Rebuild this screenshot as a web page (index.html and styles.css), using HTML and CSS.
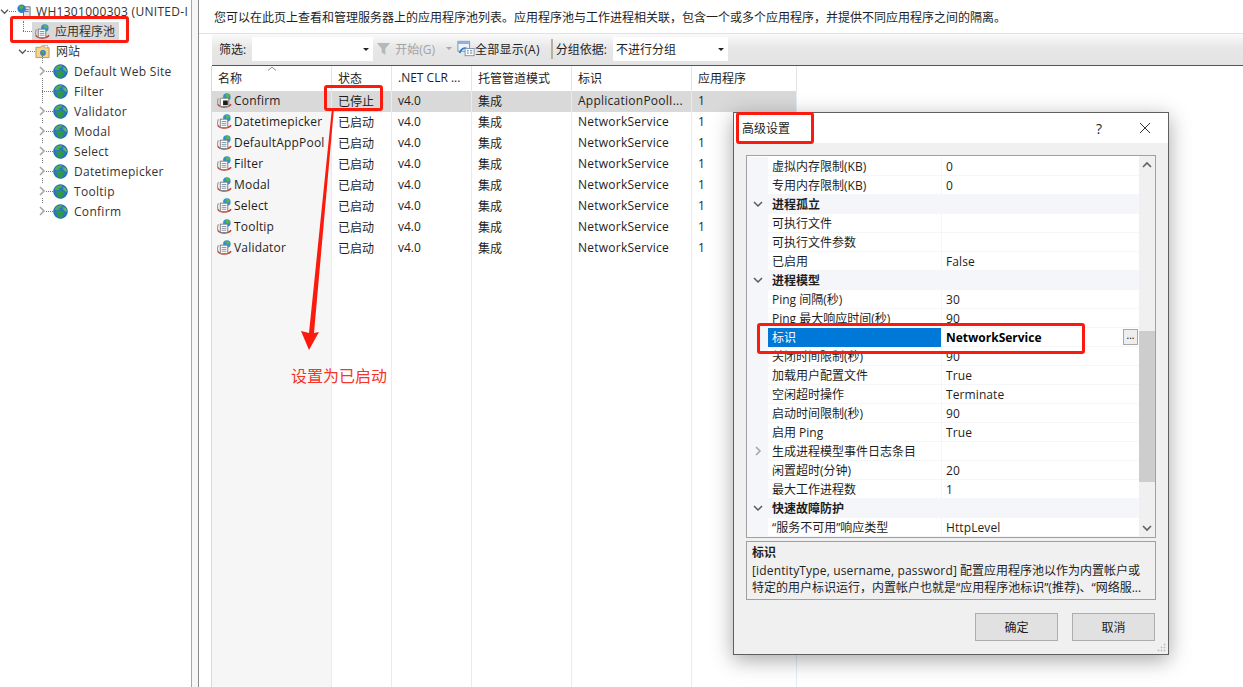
FILE: index.html
```html
<!DOCTYPE html>
<html lang="zh-CN">
  <head>
    <meta charset="utf-8">
    <title>应用程序池</title>
    <link rel="stylesheet" href="styles.css">
  </head>
  <body>
    <!-- icons used more than once -->
    <svg class="defs" width="0" height="0">
      <symbol id="globe" viewBox="0 0 16 16">
        <circle cx="8" cy="8" r="7.5" fill="#2b78bf"/>
        <path d="M3 3.200C5 1.400 8 .9 10.400 1.400L9.200 3.600 7 4 6.600 6 4.400 6.600 1.500 6C1.700 5 2.300 4 3 3.200Z" fill="#4fae4c"/>
        <path d="M3.500 8 8.300 6.800 11.800 9 10.400 12.300 9 15.300C6.800 15.400 5 14.400 4.600 12.500Z" fill="#2f9a46"/>
        <path d="M11 3 14.400 5.400 15.200 8.500 12.600 7.400 11 5.600Z" fill="#63bd58"/>
        <circle cx="8" cy="8" r="7.300" fill="none" stroke="#1c5a94" stroke-width=".6"/>
      </symbol>
      <symbol id="pool" viewBox="0 0 16 16">
        <path d="M1.500 5.500C.3 8 .3 10 1 12" fill="none" stroke="#9a9a9a" stroke-width="1.200"/>
        <circle cx="10.500" cy="4.300" r="4" fill="#2f8fd0"/>
        <path d="M8.800 1.600 11.800 .9 14 3.200 11.500 5 10 4.200Z" fill="#58b64c"/>
        <path d="M.8 12C2.500 15.800 12.500 15.800 15 12" fill="none" stroke="#c8392f" stroke-width="1.500"/>
        <rect x="3.500" y="5.500" width="8" height="9" fill="#fbfbfb" stroke="#7d7d7d"/>
        <path d="M5 8H10M5 10H10M5 12H10" stroke="#7f95ad"/>
      </symbol>
      <symbol id="pool-stop" viewBox="0 0 16 16">
        <path d="M1.500 5.500C.3 8 .3 10 1 12" fill="none" stroke="#9a9a9a" stroke-width="1.200"/>
        <circle cx="10.500" cy="4.300" r="4" fill="#2f8fd0"/>
        <path d="M8.800 1.600 11.800 .9 14 3.200 11.500 5 10 4.200Z" fill="#58b64c"/>
        <path d="M.8 12C2.500 15.800 12.500 15.800 15 12" fill="none" stroke="#c8392f" stroke-width="1.500"/>
        <rect x="3.500" y="5.500" width="9" height="9" rx="1" fill="#fbfbfb" stroke="#7d7d7d"/>
        <rect x="6.500" y="8" width="5" height="5" fill="#1c1c1c"/>
      </symbol>
      <symbol id="chev-right" viewBox="0 0 8 10">
        <path d="M2 1 6 5 2 9" fill="none" stroke="#a6a6a6" stroke-width="1.600"/>
      </symbol>
      <symbol id="chev-down" viewBox="0 0 10 8">
        <path d="M1 2 5 6 9 2" fill="none" stroke="#595959" stroke-width="1.500"/>
      </symbol>
    </svg>

    <nav class="tree">
      <div class="tree-row tree-server">
        <svg class="chev"><use href="#chev-down"/></svg>
        <i class="dots dots-short"></i>
        <svg class="icon" viewBox="0 0 16 16">
          <rect x="8" y="3" width="7" height="11" fill="#dfe3e8" stroke="#6b7078"/>
          <path d="M9.500 6H13.500M9.500 8H13.500" stroke="#6b7078"/>
          <circle cx="6" cy="5" r="4.500" fill="#2f7fc9"/>
          <path d="M3 2.500 7 1.500 8 4 5 6Z" fill="#55b04a"/>
          <rect x="8" y="13" width="4" height="2" fill="#3fa142"/>
        </svg>
        <span class="tree-label">WH1301000303 (UNITED-I</span>
      </div>
      <div class="tree-row tree-pools">
        <i class="dots dots-pools"></i>
        <span class="tree-selected">
          <svg class="icon"><use href="#pool"/></svg>
          <span class="tree-label">应用程序池</span>
        </span>
      </div>
      <div class="tree-row tree-sites">
        <svg class="chev"><use href="#chev-down"/></svg>
        <i class="dots dots-tiny"></i>
        <svg class="icon" viewBox="0 0 16 16">
          <path d="M1 3.500H6L7 2H13V4H15V14.500H1Z" fill="#f3d58c" stroke="#b9965a"/>
          <path d="M10 1.500H13.500V4H10Z" fill="#fff" stroke="#b9965a" stroke-width=".6"/>
          <circle cx="8.500" cy="9.500" r="3" fill="#2f7fc9"/>
          <path d="M7 8 9.500 7.500 10 10 8 11Z" fill="#55b04a"/>
        </svg>
        <span class="tree-label">网站</span>
      </div>
      <div class="site-list">
        <div class="tree-row site">
          <svg class="chev-r"><use href="#chev-right"/></svg><i class="dots"></i>
          <svg class="icon"><use href="#globe"/></svg><span class="tree-label">Default Web Site</span>
        </div>
        <div class="tree-row site">
          <span class="chev-r chev-none"></span><i class="dots dots-long"></i>
          <svg class="icon"><use href="#globe"/></svg><span class="tree-label">Filter</span>
        </div>
        <div class="tree-row site">
          <svg class="chev-r"><use href="#chev-right"/></svg><i class="dots"></i>
          <svg class="icon"><use href="#globe"/></svg><span class="tree-label">Validator</span>
        </div>
        <div class="tree-row site">
          <svg class="chev-r"><use href="#chev-right"/></svg><i class="dots"></i>
          <svg class="icon"><use href="#globe"/></svg><span class="tree-label">Modal</span>
        </div>
        <div class="tree-row site">
          <svg class="chev-r"><use href="#chev-right"/></svg><i class="dots"></i>
          <svg class="icon"><use href="#globe"/></svg><span class="tree-label">Select</span>
        </div>
        <div class="tree-row site">
          <svg class="chev-r"><use href="#chev-right"/></svg><i class="dots"></i>
          <svg class="icon"><use href="#globe"/></svg><span class="tree-label">Datetimepicker</span>
        </div>
        <div class="tree-row site">
          <svg class="chev-r"><use href="#chev-right"/></svg><i class="dots"></i>
          <svg class="icon"><use href="#globe"/></svg><span class="tree-label">Tooltip</span>
        </div>
        <div class="tree-row site">
          <svg class="chev-r"><use href="#chev-right"/></svg><i class="dots"></i>
          <svg class="icon"><use href="#globe"/></svg><span class="tree-label">Confirm</span>
        </div>
      </div>
    </nav>

    <div class="splitter"></div>

    <main class="content">
      <p class="intro">您可以在此页上查看和管理服务器上的应用程序池列表。应用程序池与工作进程相关联，包含一个或多个应用程序，并提供不同应用程序之间的隔离。</p>

      <div class="toolbar">
        <label class="tb-label">筛选:</label>
        <div class="combo combo-filter"><b class="caret"></b></div>
        <svg class="tb-funnel" viewBox="0 0 16 16">
          <path d="M1 2H15L10 8V15L6 12V8Z" fill="#b5b9b8"/>
        </svg>
        <span class="tb-disabled">开始(G)</span>
        <b class="caret caret-disabled"></b>
        <svg class="tb-show" viewBox="0 0 20 18">
          <rect x="1" y="1" width="13" height="11" fill="#eef3f9" stroke="#7a8ea8"/>
          <rect x="1" y="1" width="13" height="3" fill="#8db3dc"/>
          <path d="M3 14C4 9 8 8 11 9" fill="none" stroke="#2a7fc9" stroke-width="2"/>
          <rect x="9" y="9" width="10" height="8" fill="#fff" stroke="#7a8ea8"/>
          <path d="M11 11.500H13M14.500 11.500H17M11 14H13M14.500 14H17" stroke="#4a6a8a"/>
        </svg>
        <span class="tb-text">全部显示(A)</span>
        <i class="tb-sep"></i>
        <label class="tb-label">分组依据:</label>
        <div class="combo combo-group">不进行分组<b class="caret"></b></div>
      </div>

      <table class="pools">
        <thead>
          <tr>
            <th class="col-name">名称<svg class="sort" viewBox="0 0 10 5"><path d="M1 4.500 5 1 9 4.500" fill="none" stroke="#8a8a8a"/></svg></th>
            <th class="col-state">状态</th>
            <th class="col-clr">.NET CLR ...</th>
            <th class="col-mode">托管管道模式</th>
            <th class="col-id">标识</th>
            <th class="col-apps">应用程序</th>
          </tr>
        </thead>
        <tbody>
          <tr class="selected">
            <td class="name-cell"><svg class="icon"><use href="#pool-stop"/></svg>Confirm</td>
            <td>已停止</td><td>v4.0</td><td>集成</td><td>ApplicationPoolI...</td><td>1</td>
          </tr>
          <tr>
            <td class="name-cell"><svg class="icon"><use href="#pool"/></svg>Datetimepicker</td>
            <td>已启动</td><td>v4.0</td><td>集成</td><td>NetworkService</td><td>1</td>
          </tr>
          <tr>
            <td class="name-cell"><svg class="icon"><use href="#pool"/></svg>DefaultAppPool</td>
            <td>已启动</td><td>v4.0</td><td>集成</td><td>NetworkService</td><td>1</td>
          </tr>
          <tr>
            <td class="name-cell"><svg class="icon"><use href="#pool"/></svg>Filter</td>
            <td>已启动</td><td>v4.0</td><td>集成</td><td>NetworkService</td><td>1</td>
          </tr>
          <tr>
            <td class="name-cell"><svg class="icon"><use href="#pool"/></svg>Modal</td>
            <td>已启动</td><td>v4.0</td><td>集成</td><td>NetworkService</td><td>1</td>
          </tr>
          <tr>
            <td class="name-cell"><svg class="icon"><use href="#pool"/></svg>Select</td>
            <td>已启动</td><td>v4.0</td><td>集成</td><td>NetworkService</td><td>1</td>
          </tr>
          <tr>
            <td class="name-cell"><svg class="icon"><use href="#pool"/></svg>Tooltip</td>
            <td>已启动</td><td>v4.0</td><td>集成</td><td>NetworkService</td><td>1</td>
          </tr>
          <tr>
            <td class="name-cell"><svg class="icon"><use href="#pool"/></svg>Validator</td>
            <td>已启动</td><td>v4.0</td><td>集成</td><td>NetworkService</td><td>1</td>
          </tr>
          <tr class="filler">
            <td class="name-cell"></td><td></td><td></td><td></td><td></td><td></td>
          </tr>
        </tbody>
      </table>
    </main>

    <!-- advanced settings window -->
    <section class="dialog">
      <header class="dialog-title">
        <span class="dialog-name">高级设置</span>
        <span class="dialog-help">?</span>
        <svg class="dialog-close" viewBox="0 0 12 12"><path d="M1 1 11 11M11 1 1 11" stroke="#333" stroke-width="1"/></svg>
      </header>
      <div class="dialog-body">
        <div class="grid-box">
          <div class="props">
            <div class="prop"><span class="gutter"></span><span class="key">虚拟内存限制(KB)</span><span class="val">0</span></div>
            <div class="prop"><span class="gutter"></span><span class="key">专用内存限制(KB)</span><span class="val">0</span></div>
            <div class="prop group"><span class="gutter"><svg class="gchev"><use href="#chev-down"/></svg></span><span class="key">进程孤立</span></div>
            <div class="prop"><span class="gutter"></span><span class="key">可执行文件</span><span class="val"></span></div>
            <div class="prop"><span class="gutter"></span><span class="key">可执行文件参数</span><span class="val"></span></div>
            <div class="prop"><span class="gutter"></span><span class="key">已启用</span><span class="val">False</span></div>
            <div class="prop group"><span class="gutter"><svg class="gchev"><use href="#chev-down"/></svg></span><span class="key">进程模型</span></div>
            <div class="prop"><span class="gutter"></span><span class="key">Ping 间隔(秒)</span><span class="val">30</span></div>
            <div class="prop"><span class="gutter"></span><span class="key">Ping 最大响应时间(秒)</span><span class="val">90</span></div>
            <div class="prop active"><span class="gutter"></span><span class="key">标识</span><span class="val">NetworkService<button class="more">...</button></span></div>
            <div class="prop"><span class="gutter"></span><span class="key">关闭时间限制(秒)</span><span class="val">90</span></div>
            <div class="prop"><span class="gutter"></span><span class="key">加载用户配置文件</span><span class="val">True</span></div>
            <div class="prop"><span class="gutter"></span><span class="key">空闲超时操作</span><span class="val">Terminate</span></div>
            <div class="prop"><span class="gutter"></span><span class="key">启动时间限制(秒)</span><span class="val">90</span></div>
            <div class="prop"><span class="gutter"></span><span class="key">启用 Ping</span><span class="val">True</span></div>
            <div class="prop"><span class="gutter"><svg class="gchev-r"><use href="#chev-right"/></svg></span><span class="key">生成进程模型事件日志条目</span><span class="val"></span></div>
            <div class="prop"><span class="gutter"></span><span class="key">闲置超时(分钟)</span><span class="val">20</span></div>
            <div class="prop"><span class="gutter"></span><span class="key">最大工作进程数</span><span class="val">1</span></div>
            <div class="prop group"><span class="gutter"><svg class="gchev"><use href="#chev-down"/></svg></span><span class="key">快速故障防护</span></div>
            <div class="prop"><span class="gutter"></span><span class="key">“服务不可用”响应类型</span><span class="val">HttpLevel</span></div>
          </div>
          <div class="scrollbar">
            <svg class="sb-arrow" viewBox="0 0 10 8"><path d="M1 6 5 2 9 6" fill="none" stroke="#606060" stroke-width="1.600"/></svg>
            <div class="sb-track"><div class="sb-thumb"></div></div>
            <svg class="sb-arrow" viewBox="0 0 10 8"><path d="M1 2 5 6 9 2" fill="none" stroke="#606060" stroke-width="1.600"/></svg>
          </div>
        </div>
        <div class="desc">
          <strong class="desc-title">标识</strong>
          <p class="desc-text"><span class="latin">[identityType, username, password]</span> 配置应用程序池以作为内置帐户或<br>特定的用户标识运行，内置帐户也就是“应用程序池标识”(推荐)、“网络服...</p>
        </div>
        <div class="dialog-buttons">
          <button class="btn">确定</button>
          <button class="btn">取消</button>
        </div>
      </div>
      <svg class="grip" viewBox="0 0 12 12">
        <path d="M9 1H11V3H9ZM5 5H7V7H5ZM9 5H11V7H9ZM1 9H3V11H1ZM5 9H7V11H5ZM9 9H11V11H9Z" fill="#b5b5b5"/>
      </svg>
    </section>

    <!-- red annotations on top of the screenshot -->
    <div class="mark mark-pools"></div>
    <div class="mark mark-state"></div>
    <div class="mark mark-title"></div>
    <div class="mark mark-identity"></div>
    <svg class="arrow" viewBox="0 0 40 245">
      <path d="M33 1 34 1 14 226 19 225 9 243 1 224 9 226 32 1Z" fill="#fb1a0e"/>
    </svg>
    <span class="note">设置为已启动</span>
  </body>
</html>
```

FILE: styles.css
```css
* {
  box-sizing: border-box;
}

html, body {
  margin: 0;
  height: 687px;
  overflow: hidden;
}

body {
  display: flex;
  position: relative;
  width: 1243px;
  background-color: #fff;
  color: #1e1e1e;
  font-family: "Open Sans", "Noto Sans CJK SC", sans-serif;
  font-size: 12px;
}

.defs {
  position: absolute;
}

.icon {
  flex: none;
  width: 15px;
  height: 15px;
}

/* left tree */
.tree {
  flex: none;
  width: 192px;
  padding-top: 1px;
  overflow: hidden;
  border-right: 1px solid #a6a6a6;
}

.tree-row {
  display: flex;
  align-items: center;
  height: 20px;
  white-space: nowrap;
}

.tree-label {
  color: #333;
  letter-spacing: .3px;
}

.tree-selected .tree-label,
.tree-sites .tree-label {
  letter-spacing: 0;
}

.dots {
  flex: none;
  width: 7px;
  border-top: 1px dotted #777;
}

.chev {
  flex: none;
  width: 9px;
  height: 7px;
}

.chev-r {
  flex: none;
  width: 8px;
  height: 14px;
  padding: 2px 0;
  background-color: #fff;
}

.chev-none {
  background: none;
}

.tree-server .icon {
  margin-right: 5px;
}

.tree-pools {
  position: relative;
  padding-left: 23px;
}

/* dotted line from the server node down to the pools node */
.tree-pools::before {
  content: "";
  position: absolute;
  left: 23px;
  top: 0;
  height: 10px;
  border-left: 1px dotted #777;
}

.dots-pools {
  width: 9px;
}

.tree-selected {
  display: flex;
  align-items: center;
  width: 87px;
  height: 18px;
  padding-left: 3px;
  background-color: #d9d9d9;
}

.tree-selected .icon {
  margin-right: 5px;
}

.tree-sites {
  padding-left: 18px;
}

.dots-tiny {
  width: 8px;
}

.tree-sites .icon {
  margin-right: 6px;
}

.site-list {
  position: relative;
  padding-left: 38px;
}

/* dotted line joining the sites */
.site-list::before {
  content: "";
  position: absolute;
  left: 42px;
  top: -8px;
  bottom: 10px;
  border-left: 1px dotted #777;
}

.site > * {
  position: relative;
}

.site .icon {
  margin-right: 6px;
}

.dots-long {
  margin-left: -4px;
  width: 11px;
}

/* thin pane between tree and list */
.splitter {
  flex: none;
  width: 7px;
  background-color: #f6f6f6;
  border-right: 1px solid #8a8a8a;
}

.content {
  flex: 1;
  display: flex;
  flex-direction: column;
  min-width: 0;
}

.intro {
  height: 34px;
  margin: 0;
  padding: 9px 0 0 15px;
  line-height: 17px;
  border-bottom: 1px solid #e2e2e2;
}

/* toolbar */
.toolbar {
  display: flex;
  align-items: center;
  flex: none;
  height: 32px;
  margin-left: 13px;
  padding: 0 0 2px 7px;
  background: linear-gradient(#fafafa, #e8e7e8 45%, #e4e3e4);
  border-bottom: 1px solid #54545e;
}

.tb-label {
  white-space: nowrap;
}

.combo {
  display: flex;
  align-items: center;
  position: relative;
  height: 24px;
  background-color: #fff;
}

.combo-filter {
  width: 121px;
  margin-left: 6px;
}

.combo-group {
  width: 115px;
  margin-left: 6px;
  padding-left: 3px;
}

.caret {
  display: inline-block;
  width: 0;
  height: 0;
  border-left: 3px solid transparent;
  border-right: 3px solid transparent;
  border-top: 3px solid #222;
}

.combo .caret {
  position: absolute;
  right: 4px;
  top: 11px;
}

.tb-funnel {
  flex: none;
  width: 15px;
  height: 15px;
  margin-left: 3px;
}

.tb-disabled {
  margin-left: 4px;
  color: #a3a3a3;
  white-space: nowrap;
}

.caret-disabled {
  margin-left: 11px;
  border-top-color: #a8a8a8;
}

.tb-show {
  flex: none;
  width: 18px;
  height: 17px;
  margin-left: 5px;
}

.tb-text {
  letter-spacing: .3px;
  white-space: nowrap;
}

.tb-sep {
  flex: none;
  width: 2px;
  height: 20px;
  margin: 0 3px 0 11px;
  background-color: #b6b19e;
}

/* app pool list */
.pools {
  flex: 1;
  width: 585px;
  margin-left: 12px;
  border-collapse: collapse;
  table-layout: fixed;
  border-left: 1px solid #d9d9d9;
}

.pools th {
  height: 25px;
  padding: 0 5px 2px 6px;
  font-weight: normal;
  text-align: left;
  white-space: nowrap;
  border-right: 1px solid #e5e5e5;
  position: relative;
}

.pools td {
  height: 21px;
  padding: 0 0 2px 6px;
  white-space: nowrap;
  border-right: 1px solid #e3ecf7;
}

.pools td:nth-child(5) {
  letter-spacing: .25px;
}

.col-name { width: 120px; }
.col-state { width: 60px; }
.col-clr { width: 80px; }
.col-mode { width: 100px; }
.col-id { width: 120px; }
.col-apps { width: 105px; }

.sort {
  position: absolute;
  left: 55px;
  top: 0;
  width: 10px;
  height: 5px;
}

.pools .name-cell {
  padding-left: 5px;
  background-color: #f6f6f6;
  letter-spacing: .2px;
  overflow: hidden;
}

.name-cell .icon {
  margin-right: 2px;
  vertical-align: -3px;
}

.pools .selected td {
  background-color: #d9d9d9;
}

.pools .filler td {
  height: auto;
}

/* dialog window */
.dialog {
  position: absolute;
  left: 733px;
  top: 112px;
  width: 436px;
  height: 543px;
  display: flex;
  flex-direction: column;
  background-color: #f0f0f0;
  border: 1px solid #5f5f5f;
  box-shadow: 0 5px 20px rgba(0, 0, 0, .35);
}

.dialog-title {
  display: flex;
  align-items: center;
  flex: none;
  height: 30px;
  padding: 0 17px 0 8px;
  background-color: #fff;
}

.dialog-name {
  flex: 1;
}

.dialog-help {
  margin-right: 37px;
  font-size: 14px;
}

.dialog-close {
  width: 12px;
  height: 12px;
}

.dialog-body {
  flex: 1;
  padding: 12px 12px 0;
}

.grid-box {
  display: flex;
  height: 383px;
  background-color: #fff;
  border: 1px solid #a0a0a0;
}

.props {
  width: 392px;
  padding-top: 1px;
  background-color: #fff;
}

.prop {
  display: flex;
  align-items: center;
  height: 19px;
  border-bottom: 1px solid #f4f6fa;
}

.gutter {
  display: flex;
  align-items: center;
  justify-content: center;
  flex: none;
  width: 21px;
  height: 19px;
  background-color: #f4f6fa;
}

.gchev {
  width: 10px;
  height: 8px;
}

.gchev-r {
  width: 8px;
  height: 10px;
}

.key {
  flex: none;
  width: 174px;
  height: 19px;
  padding-left: 4px;
  line-height: 20px;
  white-space: nowrap;
  overflow: hidden;
  border-right: 1px solid #f4f6fa;
}

.val {
  flex: 1;
  height: 19px;
  padding-left: 4px;
  line-height: 20px;
  letter-spacing: .1px;
  position: relative;
}

.group {
  background-color: #f4f6fa;
}

.group .key {
  font-weight: bold;
  width: auto;
  border: 0;
  overflow: visible;
}

.active .key {
  background-color: #0078d7;
  color: #fff;
}

.active .val {
  font-weight: bold;
  color: #000;
  letter-spacing: 0;
}

.more {
  position: absolute;
  right: 1px;
  top: 1px;
  width: 15px;
  height: 16px;
  padding: 0 0 4px;
  background-color: #eee;
  border: 1px solid #a8a8a8;
  font: 10px "Open Sans", sans-serif;
  line-height: 10px;
  color: #000;
}

.scrollbar {
  display: flex;
  flex-direction: column;
  align-items: center;
  flex: 1;
  background-color: #f0f0f0;
}

.sb-arrow {
  flex: none;
  width: 10px;
  height: 8px;
  margin: 5px 0;
}

.sb-track {
  flex: 1;
  width: 100%;
  padding-top: 157px;
}

.sb-thumb {
  height: 151px;
  background-color: #cdcdcd;
}

.desc {
  height: 59px;
  margin-top: 3px;
  padding: 2px 5px 0;
  line-height: 17px;
  border: 1px solid #a0a0a0;
}

.desc-title {
  display: block;
  height: 18px;
}

.desc-text {
  margin: 0;
  white-space: nowrap;
}

.latin {
  letter-spacing: .15px;
}

.dialog-buttons {
  display: flex;
  justify-content: flex-end;
  gap: 14px;
  margin-top: 13px;
  padding-right: 1px;
}

.btn {
  width: 83px;
  height: 28px;
  background-color: #e1e1e1;
  border: 1px solid #adadad;
  color: #1e1e1e;
  font: 12px "Open Sans", "Noto Sans CJK SC", sans-serif;
}

.grip {
  position: absolute;
  right: 2px;
  bottom: 2px;
  width: 9px;
  height: 9px;
}

/* annotations */
.mark {
  position: absolute;
  border: 3px solid #fb1a0e;
  border-radius: 3px;
}

.mark-pools {
  left: 10px;
  top: 16px;
  width: 119px;
  height: 27px;
}

.mark-state {
  left: 324px;
  top: 85px;
  width: 59px;
  height: 26px;
}

.mark-title {
  left: 736px;
  top: 112px;
  width: 78px;
  height: 32px;
}

.mark-identity {
  left: 757px;
  top: 323px;
  width: 328px;
  height: 31px;
}

.arrow {
  position: absolute;
  left: 300px;
  top: 107px;
  width: 40px;
  height: 245px;
}

.note {
  position: absolute;
  left: 291px;
  top: 365px;
  color: #f5352a;
  font-size: 16px;
  line-height: 22px;
}
```
